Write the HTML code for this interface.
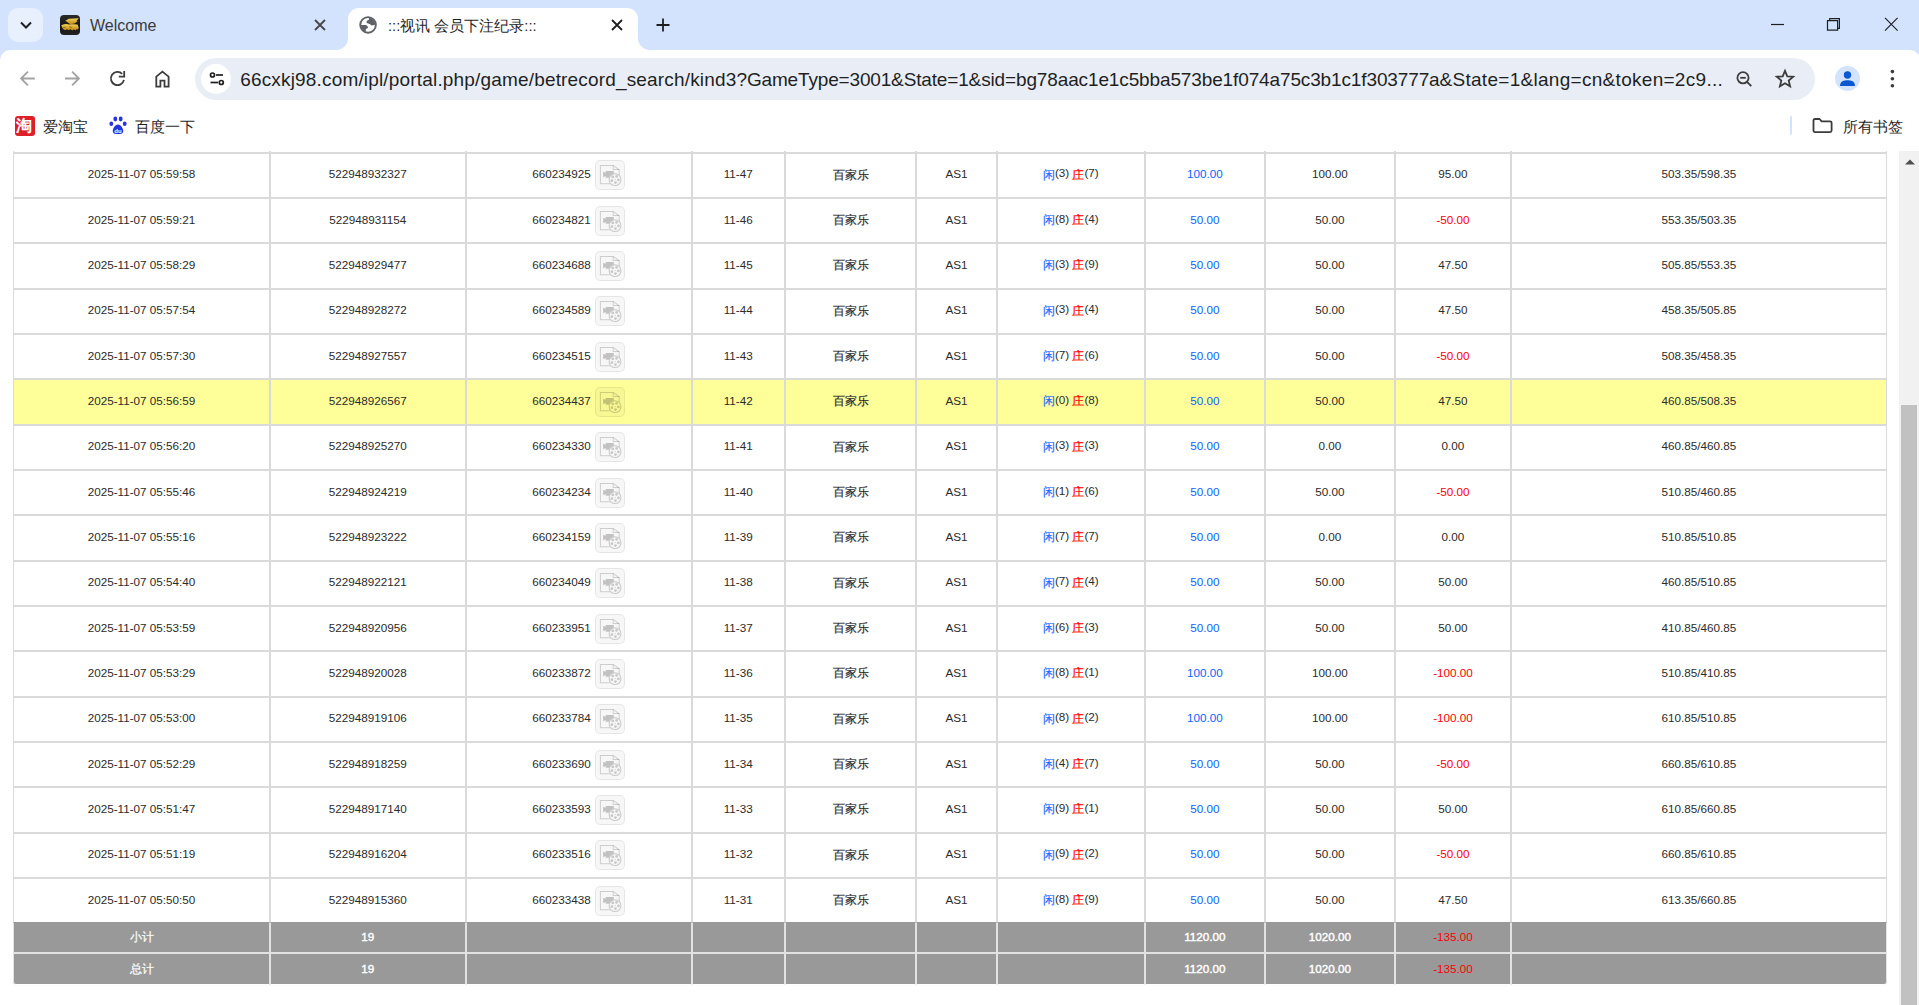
<!DOCTYPE html>
<html><head><meta charset="utf-8"><title>:::视讯 会员下注纪录:::</title>
<style>
html,body{margin:0;padding:0;width:1919px;height:1005px;overflow:hidden;background:#fff;font-family:"Liberation Sans",sans-serif;position:relative;}
.abs{position:absolute;}
#tabbar{position:absolute;left:0;top:0;width:1920px;height:60px;background:#d3e3fd;z-index:5;}
#toolbar{position:absolute;left:0;top:50px;width:1920px;height:101px;background:#fff;z-index:6;border-radius:10px 10px 0 0;}
#ddbtn{position:absolute;left:8px;top:8px;width:35px;height:34px;background:#e8effd;border-radius:10px;}
.tabtitle{position:absolute;top:14px;font-size:16px;line-height:22px;color:#1f1f1f;white-space:nowrap;}
#acttab{position:absolute;left:348px;top:7.5px;width:290px;height:42.5px;background:#fff;border-radius:11px 11px 0 0;}
.flare{position:absolute;top:38px;width:12px;height:12px;overflow:hidden;}
#omni{position:absolute;left:195px;top:8px;width:1620px;height:42px;background:#e9eef6;border-radius:21px;}
#siteinfo{position:absolute;left:6px;top:6px;width:30px;height:30px;border-radius:50%;background:#fff;}
#url{position:absolute;left:0;top:9.5px;font-size:19px;line-height:24px;color:#1f1f1f;white-space:nowrap;}
#url span{position:absolute;top:0;}
.bm{position:absolute;top:66px;font-size:15px;line-height:22px;color:#1f1f1f;white-space:nowrap;}
#view{position:absolute;left:0;top:151px;width:1899px;height:854px;overflow:hidden;background:#fff;}
#sb{position:absolute;left:1899px;top:151px;width:20px;height:854px;background:#f1f1f1;}
#thumb{position:absolute;left:2px;top:254px;width:16px;height:600px;background:#c1c1c1;}
table.t{position:absolute;left:13px;top:-9.25px;border-collapse:separate;border-spacing:0;table-layout:fixed;width:1874px;font-size:11.7px;color:#2b2b2b;}
table.t td{border:1px solid #dadada;padding:0;text-align:center;vertical-align:middle;white-space:nowrap;}
tr.dum td{height:10px;border-top:0;}
tr.r td{height:40.334px;padding-bottom:3px;background:#fff;}
tr.r.y td{background:#ffff99;}
tr.r.last td{border-bottom-color:#999;}
tr.g td{background:#999;color:#fff;font-weight:normal;-webkit-text-stroke:0.4px #fff;height:29.75px;border-color:#e2e2e2;}
tr.g1 td{border-top:0;height:26.75px;padding-bottom:2px;}
tr.g2 td{height:28.75px;padding-bottom:1px;border-bottom-color:#fff;}
tr.g2 td:first-child{border-bottom-left-radius:3px;}
tr.g2 td:last-child{border-bottom-right-radius:3px;}
tr.g td.neg{color:#f00;font-weight:normal;-webkit-text-stroke:0;}
td.blue{color:#0a64ff;}
td.neg{color:#f00;}
.xian{color:#1a6aff;}
.zhuang{color:#f00;}
.oid{display:inline-block;vertical-align:middle;}
.cjk{position:relative;top:1.2px;-webkit-text-stroke:0.2px currentColor;}
svg.vi{display:inline-block;vertical-align:middle;width:30px;height:30px;margin-left:4px;position:relative;top:1.5px;}
</style></head><body>
<svg width="0" height="0" style="position:absolute">
<defs>
<mask id="reelm" maskUnits="userSpaceOnUse" x="0" y="0" width="30" height="30"><rect width="30" height="30" fill="#fff"/><circle cx="19.7" cy="19.3" r="6.3" fill="#000"/></mask>
<symbol id="vid" viewBox="0 0 29.5 29.5">
<rect x="0.5" y="0.5" width="28.5" height="28.5" rx="4.5" fill="rgba(0,0,0,0.03)" stroke="rgba(0,0,0,0.085)"/>
<g mask="url(#reelm)"><path d="M5.3 5.3 H17.9 L23.8 9.6 V23.4 H5.3 Z" fill="none" stroke="rgba(0,0,0,0.17)" stroke-width="1"/>
<path d="M17.9 5.3 V9.4 H23.8" fill="none" stroke="rgba(0,0,0,0.17)" stroke-width="1"/>
<path d="M8 11.5 L10.5 12.6 V10.8 H18.5 V17.5 H10.5 V15.8 L8 16.9 Z" fill="rgba(0,0,0,0.21)"/></g>
<circle cx="19.7" cy="19.3" r="5.8" fill="none" stroke="rgba(0,0,0,0.19)" stroke-width="1"/>
<g fill="rgba(0,0,0,0.19)"><circle cx="17.5" cy="16.7" r="1.35"/><circle cx="21.2" cy="16.2" r="1.35"/><circle cx="23" cy="19.6" r="1.35"/><circle cx="20.1" cy="22.2" r="1.35"/><circle cx="16.6" cy="20.4" r="1.35"/><circle cx="19.8" cy="19.2" r="0.6"/></g>
</symbol>
</defs></svg>

<div id="tabbar">
  <div id="ddbtn"><svg class="abs" style="left:10px;top:10px" width="16" height="14" viewBox="0 0 16 14"><path d="M3 4.5 L8 9.5 L13 4.5" fill="none" stroke="#1f1f1f" stroke-width="2"/></svg></div>
  <div class="abs" style="left:60px;top:15px;width:20px;height:20px;border-radius:4px;background:linear-gradient(#2a2a2a,#141414 60%,#232323);overflow:hidden;"><svg width="20" height="20" viewBox="0 0 20 20"><defs><linearGradient id="gold" x1="0" y1="0" x2="0" y2="1"><stop offset="0" stop-color="#f7d35a"/><stop offset="1" stop-color="#b8840f"/></linearGradient></defs><path d="M5.3 5.8 L8.8 3.8 L18.8 3.2 L16.5 6 L17.5 6.2 L15 8.2 L10.6 9.6 Z" fill="url(#gold)"/><path d="M1.2 10.2 L4 9.2 L6.3 9 L9 9.6 L13 9.2 L17.5 9.6 L18.6 12 L18.3 14.6 L16.6 14.2 L15.8 15.2 L13.8 14.6 L12.4 15.4 L10.5 14.2 L8.6 15.3 L7 14.2 L5.2 15.2 L3.4 14.3 L2.4 13 Z" fill="url(#gold)"/><path d="M3 12.6 L6 12.2 M9 11.8 L12.2 12.4" stroke="#6b4a08" stroke-width="0.6" fill="none"/></svg></div>
  <div class="tabtitle" style="left:90px;top:15px;color:#3a3a3a;">Welcome</div>
  <svg class="abs" style="left:313px;top:18px" width="14" height="14" viewBox="0 0 14 14"><path d="M2 2 L12 12 M12 2 L2 12" stroke="#474747" stroke-width="1.8"/></svg>
  <div id="acttab"></div>
  <div class="flare" style="left:336px;"><div style="position:absolute;left:0;top:0;width:12px;height:12px;background:radial-gradient(circle at 0 0, transparent 11.5px, #fff 12.5px);"></div></div>
  <div class="flare" style="left:638px;"><div style="position:absolute;left:0;top:0;width:12px;height:12px;background:radial-gradient(circle at 12px 0, transparent 11.5px, #fff 12.5px);"></div></div>
  <svg class="abs" style="left:356px;top:13px" width="24" height="24" viewBox="0 0 24 24"><defs><clipPath id="gclip"><circle cx="12.05" cy="11.93" r="7.2"/></clipPath></defs><circle cx="12.05" cy="11.93" r="7.8" fill="#fff" stroke="#5f6368" stroke-width="1.9"/><g clip-path="url(#gclip)" fill="#5f6368"><path d="M12.9 3 L12.9 6.6 C12.9 7.5 11.2 7.3 10.7 8.2 C10.2 9.2 10.8 10.3 12 10.4 C13.5 10.5 14.2 11 14.5 11.8 C15 12.6 16.5 12.6 18 12.0 L21 11.4 L21 3 Z"/><path d="M3 11.9 L8.5 12.1 C10 12.1 11 12.6 11.5 13.3 C12.4 14.5 12 15.3 10.8 15.6 C10 15.8 9.8 16.6 9.8 17.5 L9.8 21 L3 21 Z"/></g></svg>
  <div class="tabtitle" style="left:388px;top:15px;font-size:14.7px;">:::视讯 会员下注纪录:::</div>
  <svg class="abs" style="left:610px;top:18px" width="14" height="14" viewBox="0 0 14 14"><path d="M2 2 L12 12 M12 2 L2 12" stroke="#1f1f1f" stroke-width="1.8"/></svg>
  <svg class="abs" style="left:655px;top:17px" width="16" height="16" viewBox="0 0 16 16"><path d="M8 1.5 V14.5 M1.5 8 H14.5" stroke="#1f1f1f" stroke-width="1.8"/></svg>
  <svg class="abs" style="left:1768px;top:16px" width="20" height="18" viewBox="0 0 20 18"><path d="M3 8.5 H16" stroke="#1f1f1f" stroke-width="1.2"/></svg>
  <svg class="abs" style="left:1823px;top:15px" width="20" height="20" viewBox="0 0 20 20"><path d="M4.5 5.7 H14.6 V15.1 H4.5 Z" fill="none" stroke="#1f1f1f" stroke-width="1.2"/><path d="M6.7 5.7 V3.6 H16.4 V13.4 H14.6" fill="none" stroke="#1f1f1f" stroke-width="1.2"/></svg>
  <svg class="abs" style="left:1881px;top:15px" width="20" height="20" viewBox="0 0 20 20"><path d="M4 2.8 L16.6 15.6 M16.6 2.8 L4 15.6" stroke="#1f1f1f" stroke-width="1.15"/></svg>
</div>

<div id="toolbar">
  <svg class="abs" style="left:17px;top:18px" width="22" height="22" viewBox="0 0 22 22"><path d="M17.8 10.5 H4.2 M10.9 3.7 L4.1 10.5 L10.9 17.3" fill="none" stroke="#a3a3a3" stroke-width="1.85"/></svg>
  <svg class="abs" style="left:61px;top:18px" width="22" height="22" viewBox="0 0 22 22"><path d="M4 10.5 H17.6 M11.1 3.7 L17.9 10.5 L11.1 17.3" fill="none" stroke="#a3a3a3" stroke-width="1.85"/></svg>
  <svg class="abs" style="left:107px;top:18px" width="22" height="22" viewBox="0 0 22 22"><path d="M16.96 11.87 A6.6 6.6 0 1 1 15.17 5.83" fill="none" stroke="#3c3c3c" stroke-width="1.8"/><path d="M17.2 3.1 V8.6 H11.8" fill="none" stroke="#3c3c3c" stroke-width="1.8"/></svg>
  <svg class="abs" style="left:151px;top:18px" width="22" height="22" viewBox="0 0 22 22"><path d="M5.3 18.6 V8.6 L11.4 3.6 L17.6 8.6 V18.6 H13.5 V12.7 H9.4 V18.6 Z" fill="none" stroke="#3c3c3c" stroke-width="1.8" stroke-linejoin="miter"/></svg>
  <div id="omni">
    <div id="siteinfo"><svg class="abs" style="left:6px;top:5px" width="20" height="20" viewBox="0 0 20 20"><circle cx="5.5" cy="6" r="2" fill="none" stroke="#1f1f1f" stroke-width="1.7"/><path d="M9 6 H16" stroke="#1f1f1f" stroke-width="1.7"/><circle cx="14.3" cy="13.5" r="2" fill="none" stroke="#1f1f1f" stroke-width="1.7"/><path d="M3.5 13.5 H11" stroke="#1f1f1f" stroke-width="1.7"/></svg></div>
    <div id="url"><span style="left:45.2px;letter-spacing:0.171px">66cxkj98.com/ipl/portal.php/game/betrecord_search/kind3</span><span style="left:541.5px;letter-spacing:-0.16px">?GameType=3001&amp;State=1</span><span style="left:773.6px;letter-spacing:-0.13px">&amp;sid=bg78aac1e1c5bba573be1f074a75c3b1c1f303777a</span><span style="left:1244.5px;letter-spacing:0.29px">&amp;State=1&amp;lang=cn&amp;token=2c9...</span></div>
    <svg class="abs" style="left:1539px;top:11px" width="22" height="22" viewBox="0 0 22 22"><circle cx="9" cy="8.8" r="5.6" fill="none" stroke="#3c3c3c" stroke-width="1.8"/><path d="M6.2 8.8 H11.8" stroke="#3c3c3c" stroke-width="1.8"/><path d="M12.8 12.6 L17.3 17.1" stroke="#3c3c3c" stroke-width="1.9"/></svg>
    <svg class="abs" style="left:1579px;top:10px" width="22" height="22" viewBox="0 0 22 22"><path d="M11 2.8 L13.3 8.3 L19.2 8.7 L14.7 12.5 L16.1 18.3 L11 15.2 L5.9 18.3 L7.3 12.5 L2.8 8.7 L8.7 8.3 Z" fill="none" stroke="#3c3c3c" stroke-width="1.8" stroke-linejoin="miter"/></svg>
  </div>
  <div class="abs" style="left:1835px;top:16px;width:25px;height:25px;border-radius:50%;background:#d3e3fd;"><svg width="25" height="25" viewBox="0 0 25 25"><circle cx="12.5" cy="9" r="3.7" fill="#0b57d0"/><path d="M5 20 C5 15.2 9 14.2 12.5 14.2 C16 14.2 20 15.2 20 20 Z" fill="#0b57d0"/></svg></div>
  <svg class="abs" style="left:1886px;top:18px" width="12" height="22" viewBox="0 0 12 22"><circle cx="6.4" cy="3.6" r="1.8" fill="#3c3c3c"/><circle cx="6.4" cy="10.7" r="1.8" fill="#3c3c3c"/><circle cx="6.4" cy="17.7" r="1.8" fill="#3c3c3c"/></svg>

  <div class="abs" style="left:15px;top:66px;width:20px;height:20px;border-radius:3px;background:#dc1f29;"><span style="position:absolute;left:1px;top:1px;font-size:16px;line-height:18px;color:#fff;font-weight:bold;">淘</span></div>
  <div class="bm" style="left:43px;">爱淘宝</div>
  <svg class="abs" style="left:109px;top:66px" width="18" height="19" viewBox="0 0 18 19"><ellipse cx="6.3" cy="3" rx="1.9" ry="2.4" fill="#2932e1"/><ellipse cx="11.7" cy="3" rx="1.9" ry="2.4" fill="#2932e1"/><ellipse cx="2.3" cy="7.8" rx="1.9" ry="2.3" fill="#2932e1"/><ellipse cx="15.7" cy="7.8" rx="1.9" ry="2.3" fill="#2932e1"/><path d="M9 8.5 C6 8.5 3.5 13 3.8 15.5 C4.2 18 6.5 18 9 18 C11.5 18 13.8 18 14.2 15.5 C14.5 13 12 8.5 9 8.5 Z" fill="#2932e1"/><text x="9" y="16.5" font-size="6" fill="#fff" text-anchor="middle" font-family="Liberation Sans" font-weight="bold">du</text></svg>
  <div class="bm" style="left:135px;">百度一下</div>
  <div class="abs" style="left:1790px;top:66px;width:2px;height:19px;background:#d3e3fd;border-radius:1px;"></div>
  <svg class="abs" style="left:1811px;top:66px" width="22" height="20" viewBox="0 0 22 20"><path d="M2.5 4.5 Q2.5 3 4 3 H8.6 L10.6 5.3 H19.1 Q20.6 5.3 20.6 6.8 V14.6 Q20.6 16.1 19.1 16.1 H4 Q2.5 16.1 2.5 14.6 Z" fill="none" stroke="#3c3c3c" stroke-width="1.8" stroke-linejoin="round"/></svg>
  <div class="bm" style="left:1843px;">所有书签</div>
</div>

<div id="view">
<div style="position:absolute;left:15px;top:829px;width:1871px;height:3px;border-radius:0 0 3px 3px;box-shadow:0 1px 2px rgba(0,0,0,0.28);"></div>
<table class="t">
<colgroup><col style="width:257px"><col style="width:195.5px"><col style="width:226px"><col style="width:93.5px"><col style="width:131px"><col style="width:81px"><col style="width:147.7px"><col style="width:120.3px"><col style="width:130px"><col style="width:116px"><col style="width:376px"></colgroup>
<tr class="dum"><td></td><td></td><td></td><td></td><td></td><td></td><td></td><td></td><td></td><td></td><td></td></tr>
<tr class="r"><td>2025-11-07 05:59:58</td><td>522948932327</td><td><span class="oid">660234925</span><svg class="vi"><use href="#vid"/></svg></td><td>11-47</td><td><span class="cjk">百家乐</span></td><td>AS1</td><td><span class="xian cjk">闲</span>(3) <span class="zhuang cjk">庄</span>(7)</td><td class="blue">100.00</td><td>100.00</td><td>95.00</td><td>503.35/598.35</td></tr>
<tr class="r"><td>2025-11-07 05:59:21</td><td>522948931154</td><td><span class="oid">660234821</span><svg class="vi"><use href="#vid"/></svg></td><td>11-46</td><td><span class="cjk">百家乐</span></td><td>AS1</td><td><span class="xian cjk">闲</span>(8) <span class="zhuang cjk">庄</span>(4)</td><td class="blue">50.00</td><td>50.00</td><td class="neg">-50.00</td><td>553.35/503.35</td></tr>
<tr class="r"><td>2025-11-07 05:58:29</td><td>522948929477</td><td><span class="oid">660234688</span><svg class="vi"><use href="#vid"/></svg></td><td>11-45</td><td><span class="cjk">百家乐</span></td><td>AS1</td><td><span class="xian cjk">闲</span>(3) <span class="zhuang cjk">庄</span>(9)</td><td class="blue">50.00</td><td>50.00</td><td>47.50</td><td>505.85/553.35</td></tr>
<tr class="r"><td>2025-11-07 05:57:54</td><td>522948928272</td><td><span class="oid">660234589</span><svg class="vi"><use href="#vid"/></svg></td><td>11-44</td><td><span class="cjk">百家乐</span></td><td>AS1</td><td><span class="xian cjk">闲</span>(3) <span class="zhuang cjk">庄</span>(4)</td><td class="blue">50.00</td><td>50.00</td><td>47.50</td><td>458.35/505.85</td></tr>
<tr class="r"><td>2025-11-07 05:57:30</td><td>522948927557</td><td><span class="oid">660234515</span><svg class="vi"><use href="#vid"/></svg></td><td>11-43</td><td><span class="cjk">百家乐</span></td><td>AS1</td><td><span class="xian cjk">闲</span>(7) <span class="zhuang cjk">庄</span>(6)</td><td class="blue">50.00</td><td>50.00</td><td class="neg">-50.00</td><td>508.35/458.35</td></tr>
<tr class="r y"><td>2025-11-07 05:56:59</td><td>522948926567</td><td><span class="oid">660234437</span><svg class="vi"><use href="#vid"/></svg></td><td>11-42</td><td><span class="cjk">百家乐</span></td><td>AS1</td><td><span class="xian cjk">闲</span>(0) <span class="zhuang cjk">庄</span>(8)</td><td class="blue">50.00</td><td>50.00</td><td>47.50</td><td>460.85/508.35</td></tr>
<tr class="r"><td>2025-11-07 05:56:20</td><td>522948925270</td><td><span class="oid">660234330</span><svg class="vi"><use href="#vid"/></svg></td><td>11-41</td><td><span class="cjk">百家乐</span></td><td>AS1</td><td><span class="xian cjk">闲</span>(3) <span class="zhuang cjk">庄</span>(3)</td><td class="blue">50.00</td><td>0.00</td><td>0.00</td><td>460.85/460.85</td></tr>
<tr class="r"><td>2025-11-07 05:55:46</td><td>522948924219</td><td><span class="oid">660234234</span><svg class="vi"><use href="#vid"/></svg></td><td>11-40</td><td><span class="cjk">百家乐</span></td><td>AS1</td><td><span class="xian cjk">闲</span>(1) <span class="zhuang cjk">庄</span>(6)</td><td class="blue">50.00</td><td>50.00</td><td class="neg">-50.00</td><td>510.85/460.85</td></tr>
<tr class="r"><td>2025-11-07 05:55:16</td><td>522948923222</td><td><span class="oid">660234159</span><svg class="vi"><use href="#vid"/></svg></td><td>11-39</td><td><span class="cjk">百家乐</span></td><td>AS1</td><td><span class="xian cjk">闲</span>(7) <span class="zhuang cjk">庄</span>(7)</td><td class="blue">50.00</td><td>0.00</td><td>0.00</td><td>510.85/510.85</td></tr>
<tr class="r"><td>2025-11-07 05:54:40</td><td>522948922121</td><td><span class="oid">660234049</span><svg class="vi"><use href="#vid"/></svg></td><td>11-38</td><td><span class="cjk">百家乐</span></td><td>AS1</td><td><span class="xian cjk">闲</span>(7) <span class="zhuang cjk">庄</span>(4)</td><td class="blue">50.00</td><td>50.00</td><td>50.00</td><td>460.85/510.85</td></tr>
<tr class="r"><td>2025-11-07 05:53:59</td><td>522948920956</td><td><span class="oid">660233951</span><svg class="vi"><use href="#vid"/></svg></td><td>11-37</td><td><span class="cjk">百家乐</span></td><td>AS1</td><td><span class="xian cjk">闲</span>(6) <span class="zhuang cjk">庄</span>(3)</td><td class="blue">50.00</td><td>50.00</td><td>50.00</td><td>410.85/460.85</td></tr>
<tr class="r"><td>2025-11-07 05:53:29</td><td>522948920028</td><td><span class="oid">660233872</span><svg class="vi"><use href="#vid"/></svg></td><td>11-36</td><td><span class="cjk">百家乐</span></td><td>AS1</td><td><span class="xian cjk">闲</span>(8) <span class="zhuang cjk">庄</span>(1)</td><td class="blue">100.00</td><td>100.00</td><td class="neg">-100.00</td><td>510.85/410.85</td></tr>
<tr class="r"><td>2025-11-07 05:53:00</td><td>522948919106</td><td><span class="oid">660233784</span><svg class="vi"><use href="#vid"/></svg></td><td>11-35</td><td><span class="cjk">百家乐</span></td><td>AS1</td><td><span class="xian cjk">闲</span>(8) <span class="zhuang cjk">庄</span>(2)</td><td class="blue">100.00</td><td>100.00</td><td class="neg">-100.00</td><td>610.85/510.85</td></tr>
<tr class="r"><td>2025-11-07 05:52:29</td><td>522948918259</td><td><span class="oid">660233690</span><svg class="vi"><use href="#vid"/></svg></td><td>11-34</td><td><span class="cjk">百家乐</span></td><td>AS1</td><td><span class="xian cjk">闲</span>(4) <span class="zhuang cjk">庄</span>(7)</td><td class="blue">50.00</td><td>50.00</td><td class="neg">-50.00</td><td>660.85/610.85</td></tr>
<tr class="r"><td>2025-11-07 05:51:47</td><td>522948917140</td><td><span class="oid">660233593</span><svg class="vi"><use href="#vid"/></svg></td><td>11-33</td><td><span class="cjk">百家乐</span></td><td>AS1</td><td><span class="xian cjk">闲</span>(9) <span class="zhuang cjk">庄</span>(1)</td><td class="blue">50.00</td><td>50.00</td><td>50.00</td><td>610.85/660.85</td></tr>
<tr class="r"><td>2025-11-07 05:51:19</td><td>522948916204</td><td><span class="oid">660233516</span><svg class="vi"><use href="#vid"/></svg></td><td>11-32</td><td><span class="cjk">百家乐</span></td><td>AS1</td><td><span class="xian cjk">闲</span>(9) <span class="zhuang cjk">庄</span>(2)</td><td class="blue">50.00</td><td>50.00</td><td class="neg">-50.00</td><td>660.85/610.85</td></tr>
<tr class="r last"><td>2025-11-07 05:50:50</td><td>522948915360</td><td><span class="oid">660233438</span><svg class="vi"><use href="#vid"/></svg></td><td>11-31</td><td><span class="cjk">百家乐</span></td><td>AS1</td><td><span class="xian cjk">闲</span>(8) <span class="zhuang cjk">庄</span>(9)</td><td class="blue">50.00</td><td>50.00</td><td>47.50</td><td>613.35/660.85</td></tr>
<tr class="g g1"><td><span class="cjk">小计</span></td><td>19</td><td></td><td></td><td></td><td></td><td></td><td>1120.00</td><td>1020.00</td><td class="neg">-135.00</td><td></td></tr>
<tr class="g g2"><td><span class="cjk">总计</span></td><td>19</td><td></td><td></td><td></td><td></td><td></td><td>1120.00</td><td>1020.00</td><td class="neg">-135.00</td><td></td></tr>
</table>
</div>
<div id="sb"><svg class="abs" style="left:5.5px;top:8px" width="10" height="6" viewBox="0 0 10 6"><path d="M0 5.5 L5 0.5 L10 5.5 Z" fill="#505050"/></svg><div id="thumb"></div></div>
</body></html>
